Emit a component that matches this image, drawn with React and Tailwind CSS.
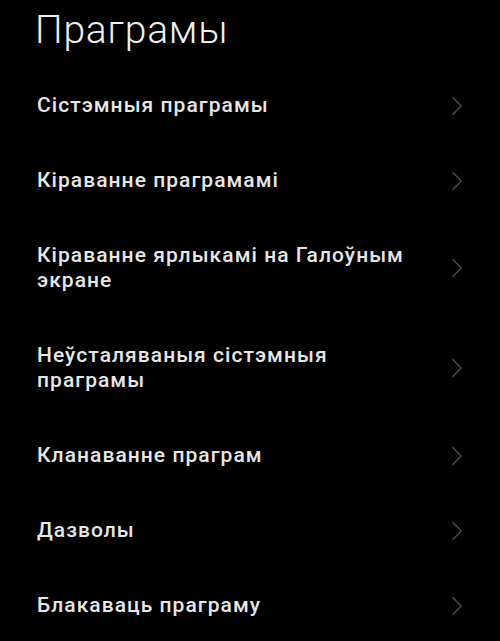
import { ChevronRight } from 'lucide-react';

const items = [
  'Сістэмныя праграмы',
  'Кіраванне праграмамі',
  'Кіраванне ярлыкамі на Галоўным экране',
  'Неўсталяваныя сістэмныя праграмы',
  'Кланаванне праграм',
  'Дазволы',
  'Блакаваць праграму',
];

export default function App() {
  return (
    <div className="w-[500px] h-[641px] overflow-hidden bg-black text-[#e6e6e6]" style={{ fontFamily: 'Roboto, "Noto Sans", sans-serif' }}>
      <h1 className="pl-[35px] pt-[6px] text-[39px] leading-[48px] font-light tracking-[0.02em] text-[#f0f0f0]">Праграмы</h1>
      <div className="mt-[14px]">
        {items.map((label) => (
          <div key={label} className="flex items-center justify-between pl-[37px] pr-[26px] py-[25px]">
            <span className="max-w-[385px] text-[21px] leading-[25px] font-medium tracking-[0.05em]">{label}</span>
            <ChevronRight className="w-[34px] h-[34px] -my-[5px] text-[#4a4a4a]" strokeWidth={1} />
          </div>
        ))}
      </div>
    </div>
  );
}
